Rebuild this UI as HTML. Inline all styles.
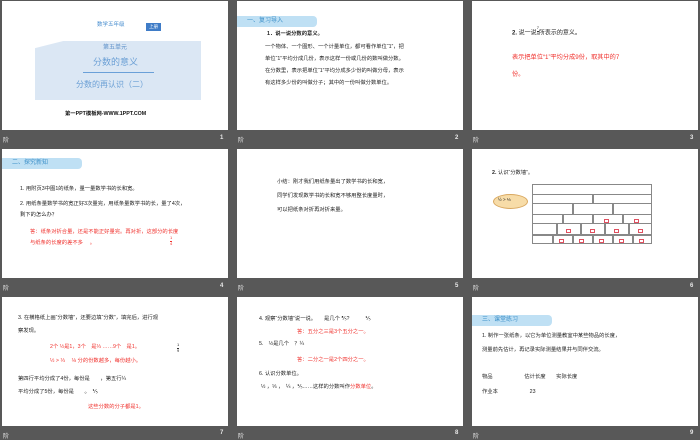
<!DOCTYPE html>
<html><head><meta charset="utf-8"><style>
*{margin:0;padding:0;box-sizing:border-box}
body{width:700px;height:438px;background:#585858;position:relative;overflow:hidden;font-family:"Liberation Sans","Noto Sans CJK SC",sans-serif;}
.s{position:absolute;width:226px;height:129px;background:#fff;overflow:hidden}
.t{position:absolute;white-space:nowrap;font-size:5.3px;color:#222;line-height:1}
.r{color:#f0302c}
.ft{position:absolute;color:#e8e8e8;font-size:6px;font-weight:bold}
.hd{position:absolute;left:0;width:80px;height:11px;background:#bfe0f4;border-radius:0 4px 4px 0;color:#3b8fc8;font-size:6px;line-height:11px;padding-left:10px}
.fr{display:inline-block;vertical-align:middle;text-align:center;font-size:4px;line-height:4.5px}
.fr span{display:block}
.fr .n{border-bottom:0.5px solid #333}
.wall div{position:absolute;border:0.6px solid #888}
.bx{position:absolute;width:5px;height:4px;border:0.7px solid #e05060}
</style></head><body>

<!-- slide 1 -->
<div class="s" style="left:2px;top:1px">
 <div class="t" style="left:95px;top:22px;color:#4a8fd0;font-size:5.5px">数学五年级</div>
 <div style="position:absolute;left:144px;top:22px;width:15px;height:8px;background:#3f7cc7;color:#fff;font-size:4.5px;text-align:center;line-height:8px">上册</div>
 <div style="position:absolute;left:33px;top:40px;width:166px;height:59px;background:#dbe7f4;clip-path:polygon(0 12%,17% 0,100% 0,100% 100%,0 100%)"></div>
 <div class="t" style="left:101px;top:44px;color:#5b8fc8;font-size:6px">第五单元</div>
 <div class="t" style="left:91px;top:57px;color:#6a9fd5;font-size:9px">分数的意义</div>
 <div style="position:absolute;left:81px;top:71px;width:71px;height:0.8px;background:#6aa0d8"></div>
 <div class="t" style="left:74px;top:80px;color:#6a9fd5;font-size:8px">分数的再认识（二）</div>
 <div class="t" style="left:63px;top:111px;color:#111;font-size:5.3px;font-weight:bold">第一PPT模板网-WWW.1PPT.COM</div>
</div>
<div class="ft" style="left:3px;top:135px;font-weight:normal">阶</div><div class="ft" style="left:220px;top:135px">1</div>

<!-- slide 2 -->
<div class="s" style="left:237px;top:1px">
 <div class="hd" style="top:15px;width:80px">一、复习导入</div>
 <div class="t" style="left:30px;top:31px;font-weight:bold">1．说一说分数的意义。</div>
 <div class="t" style="left:28px;top:44px">一个物体、一个图形、一个计量单位，都可看作单位“1”，把</div>
 <div class="t" style="left:28px;top:56px">单位“1”平均分成几份，表示这样一份或几份的数叫做分数。</div>
 <div class="t" style="left:28px;top:68px">在分数里，表示把单位“1”平均分成多少份的叫做分母，表示</div>
 <div class="t" style="left:28px;top:80px">有这样多少份的叫做分子；其中的一份叫做分数单位。</div>
</div>
<div class="ft" style="left:238px;top:135px;font-weight:normal">阶</div><div class="ft" style="left:455px;top:135px">2</div>

<!-- slide 3 -->
<div class="s" style="left:472px;top:1px">
 <div class="t" style="left:40px;top:29px;font-size:6px"><b>2.</b> 说一说<span class="fr" style="margin-top:-4px"><span class="n">7</span><span>9</span></span>所表示的意义。</div>
 <div class="t r" style="left:40px;top:54px;font-size:6.2px">表示把单位“1”平均分成9份，取其中的7</div>
 <div class="t r" style="left:40px;top:71px;font-size:6.2px">份。</div>
</div>
<div class="ft" style="left:473px;top:135px;font-weight:normal">阶</div><div class="ft" style="left:690px;top:135px">3</div>

<!-- slide 4 -->
<div class="s" style="left:2px;top:149px">
 <div class="hd" style="top:9px;width:80px">二、探究新知</div>
 <div class="t" style="left:18px;top:38px">1. 用附页3中图1的纸条，量一量数学书的长和宽。</div>
 <div class="t" style="left:18px;top:53px">2. 用纸条量数学书的宽正好3次量完，用纸条量数学书的长，量了4次，</div>
 <div class="t" style="left:18px;top:64px">剩下的怎么办？</div>
 <div class="t r" style="left:28px;top:81px">答：纸条对折合量，还是不能正好量完。再对折，这部分的长度</div>
 <div class="t r" style="left:28px;top:92px">与纸条的长度的差不多　 。</div>
 <div class="t r" style="left:168px;top:87px"><span class="fr"><span class="n" style="border-color:#f0302c">1</span><span>4</span></span></div>
</div>
<div class="ft" style="left:3px;top:283px;font-weight:normal">阶</div><div class="ft" style="left:220px;top:283px">4</div>

<!-- slide 5 -->
<div class="s" style="left:237px;top:149px">
 <div class="t" style="left:40px;top:31px">小结：刚才我们用纸条量出了数学书的长和宽，</div>
 <div class="t" style="left:40px;top:45px">同学们发现数学书的长和宽不够用整长度量时，</div>
 <div class="t" style="left:40px;top:59px">可以把纸条对折再对折来量。</div>
</div>
<div class="ft" style="left:238px;top:283px;font-weight:normal">阶</div><div class="ft" style="left:455px;top:283px">5</div>

<!-- slide 6 -->
<div class="s" style="left:472px;top:149px">
 <div class="t" style="left:20px;top:22px"><b>2.</b> 认识“分数墙”。</div>
 <div style="position:absolute;left:21px;top:45px;width:35px;height:15px;background:#f7dca8;border:0.6px solid #d9a860;border-radius:50%"></div>
 <div class="t" style="left:26px;top:49px;font-size:4.5px">½ &gt; ⅓</div>
 <div class="wall">
  <div style="left:60px;top:35px;width:120px;height:60px"></div>
  <div style="left:60px;top:45px;width:120px;height:10px"></div>
  <div style="left:60px;top:65px;width:120px;height:10px"></div>
  <div style="left:60px;top:85px;width:120px;height:0"></div>
  <div style="left:120px;top:45px;width:0;height:10px"></div>
  <div style="left:100px;top:55px;width:0;height:10px"></div>
  <div style="left:140px;top:55px;width:0;height:10px"></div>
  <div style="left:90px;top:65px;width:0;height:10px"></div>
  <div style="left:120px;top:65px;width:0;height:10px"></div>
  <div style="left:150px;top:65px;width:0;height:10px"></div>
  <div style="left:84px;top:75px;width:0;height:10px"></div>
  <div style="left:108px;top:75px;width:0;height:10px"></div>
  <div style="left:132px;top:75px;width:0;height:10px"></div>
  <div style="left:156px;top:75px;width:0;height:10px"></div>
  <div style="left:80px;top:85px;width:0;height:10px"></div>
  <div style="left:100px;top:85px;width:0;height:10px"></div>
  <div style="left:120px;top:85px;width:0;height:10px"></div>
  <div style="left:140px;top:85px;width:0;height:10px"></div>
  <div style="left:160px;top:85px;width:0;height:10px"></div>
 </div>
 <div class="bx" style="left:132px;top:70px"></div><div class="bx" style="left:162px;top:70px"></div>
 <div class="bx" style="left:94px;top:80px"></div><div class="bx" style="left:118px;top:80px"></div><div class="bx" style="left:142px;top:80px"></div><div class="bx" style="left:166px;top:80px"></div>
 <div class="bx" style="left:87px;top:90px"></div><div class="bx" style="left:107px;top:90px"></div><div class="bx" style="left:127px;top:90px"></div><div class="bx" style="left:147px;top:90px"></div><div class="bx" style="left:167px;top:90px"></div>
</div>
<div class="ft" style="left:473px;top:283px;font-weight:normal">阶</div><div class="ft" style="left:690px;top:283px">6</div>

<!-- slide 7 -->
<div class="s" style="left:2px;top:297px">
 <div class="t" style="left:16px;top:19px">3. 在横格纸上画“分数墙”，还要边填“分数”，填完后，进行观</div>
 <div class="t" style="left:16px;top:32px">察发现。</div>
 <div class="t r" style="left:48px;top:48px">2个 ½是1，3个　是⅓ ……9个　是1。</div>
 <div class="t" style="left:175px;top:46px"><span class="fr"><span class="n">1</span><span>9</span></span></div>
 <div class="t r" style="left:48px;top:62px">½ &gt; ⅓ 　⅛ 分的份数越多，每份越小。</div>
 <div class="t" style="left:16px;top:80px">第四行平均分成了4份，每份是　　，第五行¼</div>
 <div class="t" style="left:16px;top:93px">平均分成了5份，每份是　　。　⅕</div>
 <div class="t r" style="left:86px;top:108px">这些分数的分子都是1。</div>
</div>
<div class="ft" style="left:3px;top:431px;font-weight:normal">阶</div><div class="ft" style="left:220px;top:430px">7</div>

<!-- slide 8 -->
<div class="s" style="left:237px;top:297px">
 <div class="t" style="left:22px;top:20px">4. 观察“分数墙”说一说。　　是几个 ⅗?　　　⅕</div>
 <div class="t r" style="left:60px;top:33px">答：五分之三是3个五分之一。</div>
 <div class="t" style="left:22px;top:45px">5.　½是几个　？¼</div>
 <div class="t r" style="left:60px;top:61px">答：二分之一是2个四分之一。</div>
 <div class="t" style="left:22px;top:75px">6. 认识分数单位。</div>
 <div class="t" style="left:24px;top:88px">½ ，⅓ ，　¼ ，⅕……这样的分数叫作<span class="r">分数单位</span>。</div>
</div>
<div class="ft" style="left:238px;top:431px;font-weight:normal">阶</div><div class="ft" style="left:455px;top:430px">8</div>

<!-- slide 9 -->
<div class="s" style="left:472px;top:297px">
 <div class="hd" style="top:18px;width:80px">三、课堂练习</div>
 <div class="t" style="left:10px;top:37px">1. 制作一张纸条，以它为单位测量教室中某些物品的长度，</div>
 <div class="t" style="left:10px;top:51px">测量前先估计，再记录实际测量结果并与同伴交流。</div>
 <div class="t" style="left:10px;top:78px">物品　　　　　　估计长度　　实际长度</div>
 <div class="t" style="left:10px;top:93px">作业本　　　　　　23</div>
</div>
<div class="ft" style="left:473px;top:431px;font-weight:normal">阶</div><div class="ft" style="left:690px;top:430px">9</div>

</body></html>
